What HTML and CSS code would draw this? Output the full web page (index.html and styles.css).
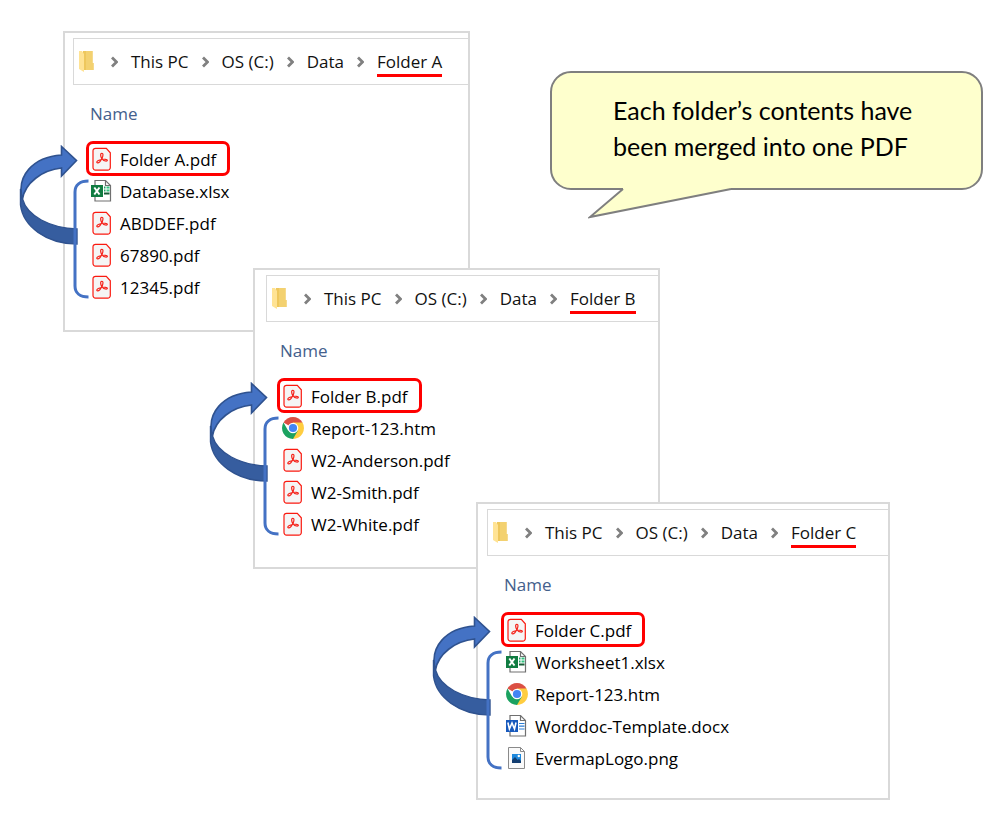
FILE: index.html
```
<!DOCTYPE html>
<html lang="en">
<head>
<meta charset="utf-8">
<title>Merged folders</title>
<link rel="stylesheet" href="styles.css">
</head>
<body>
<svg class="defs" width="0" height="0" aria-hidden="true">
  <symbol id="folder" viewBox="0 0 15 22">
    <path d="M4 0h9.500v12h1v7H4z" fill="#eec75c"/>
    <path d="M7 0h6.500v12h1v7H7z" fill="#f3d170"/>
    <path d="M0 0h3l2 3v18l-5-3z" fill="#ffe394"/>
  </symbol>
  <symbol id="chevron" viewBox="0 0 7 12">
    <path d="M1 1.500 5.500 6 1 10.500" fill="none" stroke="#808080" stroke-width="2.800"/>
  </symbol>
  <symbol id="pdf" viewBox="0 0 22 24">
    <path d="M4.500 1.300h10.800l4 4.500v14.800a2.500 2.500 0 0 1-2.500 2.500H4.500A2.500 2.500 0 0 1 2 20.600V3.800a2.500 2.500 0 0 1 2.500-2.500z" fill="#f5f5f5" stroke="#fa1a10" stroke-width="1.200"/>
    <path d="M10.800 6.300c1.800 0 1.200 2.900.2 4.900-1 2.100-2.700 4.600-4.300 4.700-1.700-.2-.8-1.900 1.200-2.600 2.200-.8 4.900-1.200 6.900-1 2 .1 2 1.900.4 1.900-1.700 0-3.400-1.200-4.500-2.900-1.200-1.800-1.600-5 .1-5z" fill="none" stroke="#f5241c" stroke-width="1.200"/>
  </symbol>
  <symbol id="sheet" viewBox="0 0 22 24">
    <path d="M4 1.500h10.500l5 5v15.500H4z" fill="#fff" stroke="#707070" stroke-width="1.200"/>
    <path d="M14.500 1.500v5h5" fill="none" stroke="#707070" stroke-width="1.200"/>
  </symbol>
  <symbol id="excel" viewBox="0 0 22 24">
    <use href="#sheet"/>
    <path d="M13 8.500h1.500M13 11.500h1.500" stroke="#21a366" stroke-width="2"/>
    <path d="M15.500 8.500h3M15.500 11.500h3" stroke="#33c481" stroke-width="2"/>
    <path d="M13 14.500h5.500" stroke="#185c37" stroke-width="2"/>
    <path d="M0 6h12v12H0z" fill="#107c41"/>
    <path d="M3.300 8.500l5.200 7M8.500 8.500l-5.200 7" stroke="#fff" stroke-width="2"/>
  </symbol>
  <symbol id="word" viewBox="0 0 22 24">
    <use href="#sheet"/>
    <path d="M13 9.500h5.500M13 12.200h5.500M13 15h5.500" stroke="#2b7cd3" stroke-width="1.200"/>
    <path d="M0 6h12v12H0z" fill="#185abd"/>
    <path d="M1.900 8.500l1.500 6.500L6 9l2.500 6L10 8.500" fill="none" stroke="#fff" stroke-width="1.600"/>
  </symbol>
  <symbol id="image" viewBox="0 0 22 24">
    <path d="M2.500 1.500h12l4 4v17h-16z" fill="#fafafa" stroke="#8a8a8a"/>
    <path d="M14.500 1.500v4h4" fill="none" stroke="#8a8a8a"/>
    <path d="M6 8h9v9H6z" fill="#1e88dc"/>
    <path d="M6 14l3-3 2.700 3 1.300-1 2 2v2H6z" fill="#123d70"/>
    <circle cx="12.800" cy="10" r="1.200" fill="#fff"/>
  </symbol>
  <symbol id="chrome" viewBox="0 0 22 22">
    <path d="M11 11 1.500 5.500A11 11 0 0 1 20.500 5.500z" fill="#db4f43"/>
    <path d="M11 11V5.500h9.500A11 11 0 0 1 11 22z" fill="#ffcd40"/>
    <path d="M1.500 5.500 6.200 13.800 11 11l4.800 2.800L11 22A11 11 0 0 1 1.500 5.500z" fill="#1ba260"/>
    <circle cx="11" cy="11" r="5.300" fill="#fff"/>
    <circle cx="11" cy="11" r="4.100" fill="#4285f4"/>
  </symbol>
  <symbol id="arrow" viewBox="0 0 60 102">
    <path d="M58 84C31 83 8 71 3.500 54L1.500 44V60C4 81 27 99 58 99z" fill="#365d9f" stroke="#2f528f" stroke-width="1.400"/>
    <path d="M3.500 54C-3 31 14 12 42.500 10V1.500L57.500 15.500 42.500 31v-8C23 25 6 38 3.500 54z" fill="#4472c4" stroke="#2f528f" stroke-width="1.600"/>
  </symbol>
  <symbol id="bracket" viewBox="0 0 16 120">
    <path d="M15.500 2C7 2 2 6 2 13v94c0 7 5 11 13.500 11" fill="none" stroke="#4472c4" stroke-width="3"/>
  </symbol>
</svg>

<main class="canvas">
  <section class="window window-a">
    <nav class="address" aria-label="Folder A location">
      <svg class="folder"><use href="#folder"/></svg>
      <svg class="chevron"><use href="#chevron"/></svg><span>This PC</span>
      <svg class="chevron"><use href="#chevron"/></svg><span>OS (C:)</span>
      <svg class="chevron"><use href="#chevron"/></svg><span>Data</span>
      <svg class="chevron"><use href="#chevron"/></svg><span class="current">Folder A</span>
    </nav>
    <h2 class="column">Name</h2>
    <ul class="files">
      <li class="merged"><svg class="icon"><use href="#pdf"/></svg>Folder A.pdf</li>
      <li class="file"><svg class="icon"><use href="#excel"/></svg>Database.xlsx</li>
      <li class="file"><svg class="icon"><use href="#pdf"/></svg>ABDDEF.pdf</li>
      <li class="file"><svg class="icon"><use href="#pdf"/></svg>67890.pdf</li>
      <li class="file"><svg class="icon"><use href="#pdf"/></svg>12345.pdf</li>
    </ul>
    <svg class="arrow"><use href="#arrow"/></svg>
    <svg class="bracket"><use href="#bracket"/></svg>
  </section>

  <section class="window window-b">
    <nav class="address" aria-label="Folder B location">
      <svg class="folder"><use href="#folder"/></svg>
      <svg class="chevron"><use href="#chevron"/></svg><span>This PC</span>
      <svg class="chevron"><use href="#chevron"/></svg><span>OS (C:)</span>
      <svg class="chevron"><use href="#chevron"/></svg><span>Data</span>
      <svg class="chevron"><use href="#chevron"/></svg><span class="current">Folder B</span>
    </nav>
    <h2 class="column">Name</h2>
    <ul class="files">
      <li class="merged"><svg class="icon"><use href="#pdf"/></svg>Folder B.pdf</li>
      <li class="file"><svg class="icon"><use href="#chrome"/></svg>Report-123.htm</li>
      <li class="file"><svg class="icon"><use href="#pdf"/></svg>W2-Anderson.pdf</li>
      <li class="file"><svg class="icon"><use href="#pdf"/></svg>W2-Smith.pdf</li>
      <li class="file"><svg class="icon"><use href="#pdf"/></svg>W2-White.pdf</li>
    </ul>
    <svg class="arrow"><use href="#arrow"/></svg>
    <svg class="bracket"><use href="#bracket"/></svg>
  </section>

  <section class="window window-c">
    <nav class="address" aria-label="Folder C location">
      <svg class="folder"><use href="#folder"/></svg>
      <svg class="chevron"><use href="#chevron"/></svg><span>This PC</span>
      <svg class="chevron"><use href="#chevron"/></svg><span>OS (C:)</span>
      <svg class="chevron"><use href="#chevron"/></svg><span>Data</span>
      <svg class="chevron"><use href="#chevron"/></svg><span class="current">Folder C</span>
    </nav>
    <h2 class="column">Name</h2>
    <ul class="files">
      <li class="merged"><svg class="icon"><use href="#pdf"/></svg>Folder C.pdf</li>
      <li class="file"><svg class="icon"><use href="#excel"/></svg>Worksheet1.xlsx</li>
      <li class="file"><svg class="icon"><use href="#chrome"/></svg>Report-123.htm</li>
      <li class="file"><svg class="icon"><use href="#word"/></svg>Worddoc-Template.docx</li>
      <li class="file"><svg class="icon"><use href="#image"/></svg>EvermapLogo.png</li>
    </ul>
    <svg class="arrow"><use href="#arrow"/></svg>
    <svg class="bracket"><use href="#bracket"/></svg>
  </section>

  <aside class="callout">
    Each folder’s contents have<br>been merged into one PDF
    <svg class="tail" viewBox="0 0 144 31"><path d="M35 0v1.500L2 29 143 1.500V0z" fill="#feffcd"/><path d="M35 1 2 29 143 1" fill="none" stroke="#7f7f7f" stroke-width="2"/></svg>
  </aside>
</main>
</body>
</html>
```
FILE: styles.css
```
body {
  margin: 0;
  background: #fff;
  color: #111;
  font-family: "Open Sans", "Noto Sans", sans-serif;
  font-size: 17px;
}

.defs {
  position: absolute;
}

.canvas {
  position: relative;
  min-height: 829px;
}

.window {
  position: absolute;
  box-sizing: border-box;
  min-width: 407px;
  padding: 5px 0 27px;
  border: 2px solid #d9d9d9;
  background: #fff;
}

.window-a {
  left: 63px;
  top: 31px;
}

.window-b {
  left: 253px;
  top: 268px;
}

.window-c {
  left: 476px;
  top: 502px;
  min-width: 414px;
  padding-bottom: 24px;
}

.address {
  display: flex;
  align-items: center;
  gap: 13px;
  height: 45px;
  margin-left: 8px;
  padding: 0 20px 0 5px;
  border: 1px solid #d9d9d9;
  border-right: 0;
  line-height: 24px;
  white-space: nowrap;
}

.window-b .address {
  margin-left: 11px;
}

.window-c .address {
  margin-left: 9px;
}

.folder {
  flex: none;
  width: 15px;
  height: 22px;
  margin-right: 4px;
}

.chevron {
  flex: none;
  width: 7px;
  height: 12px;
}

.current {
  border-bottom: 3px solid #f00;
  margin-top: 3px;
}

.column {
  margin: 16px 0 15px 25px;
  color: #44608c;
  font-size: 17px;
  font-weight: 400;
  line-height: 25px;
}

.files {
  margin: 0;
  padding: 0 0 0 21px;
  list-style: none;
}

.window-b .files {
  padding-left: 22px;
}

.window-c .column {
  margin-left: 26px;
}

.window-c .files {
  padding-left: 23px;
}

.file,
.merged {
  display: flex;
  align-items: center;
  box-sizing: border-box;
  gap: 7px;
  color: #000;
  white-space: nowrap;
}

.file {
  height: 32px;
  padding-left: 5px;
}

.merged {
  width: max-content;
  height: 35px;
  margin-bottom: -1px;
  padding: 1px 11px 0 2px;
  border: 3px solid #f00;
  border-radius: 7px;
}

.icon {
  flex: none;
  width: 22px;
  height: 24px;
}

.arrow {
  position: absolute;
  left: -46px;
  top: 112px;
  width: 60px;
  height: 102px;
}

.bracket {
  position: absolute;
  left: 8px;
  top: 146px;
  width: 16px;
  height: 120px;
}

.callout {
  position: absolute;
  left: 550px;
  top: 71px;
  box-sizing: border-box;
  min-width: 433px;
  padding: 19px 60px 24px 61px;
  border: 2px solid #7f7f7f;
  border-radius: 21px;
  background: #feffcd;
  color: #000;
  font-family: Lato, Carlito, sans-serif;
  font-size: 25px;
  line-height: 36px;
  white-space: nowrap;
}

.tail {
  position: absolute;
  left: 36px;
  top: 115px;
  width: 144px;
  height: 31px;
}
```
